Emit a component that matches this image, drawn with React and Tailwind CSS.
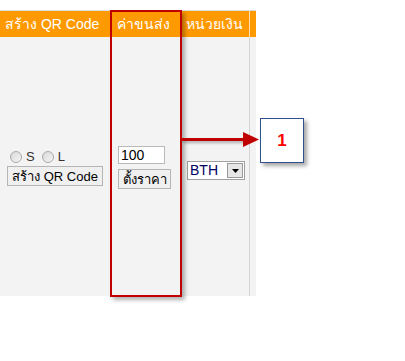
import React from "react";

const Radio = ({ label }) => (
  <label className="flex items-center gap-[4px]">
    <span className="w-[12px] h-[12px] rounded-full border border-[#a9a9a9] bg-gradient-to-br from-[#d8d8d8] to-[#f6f6f6]" />
    <span>{label}</span>
  </label>
);

const App = () => {
  return (
    <div
      className="relative w-[405px] h-[361px] bg-white text-[13px] text-black overflow-hidden"
      style={{ fontFamily: "Tahoma, 'Liberation Sans', 'Noto Sans', sans-serif" }}
    >
      {/* TABLE */}
      <div className="pt-[10px] w-[256px]">
        <div className="h-px bg-[#dcdcdc]" />
        <div className="flex h-[26px] bg-[#ff9900] text-white text-[14px] whitespace-nowrap">
          <div className="w-[111px] pl-[5px] flex items-center border-r border-[#ffc266]">สร้าง QR Code</div>
          <div className="w-[70px] pl-[6px] flex items-center border-r border-[#ffc266]">ค่าขนส่ง</div>
          <div className="w-[69px] pl-[5px] flex items-center border-r border-[#ffe0b3]">หน่วยเงิน</div>
          <div className="flex-1" />
        </div>
        <div className="flex h-[259px] bg-[#f3f3f3]">
          <div className="w-[111px] flex flex-col justify-center items-start pl-[7px] pt-[2px] border-r border-[#e2e2e2]">
            <div className="flex items-center gap-[7px] pl-[3px] text-[#333] h-[16px]">
              <Radio label="S" />
              <Radio label="L" />
            </div>
            <button className="mt-[1px] w-[96px] h-[20px] border border-[#b5b5b5] bg-[#f0f0f0] text-[13px] leading-none whitespace-nowrap text-center">
              สร้าง QR Code
            </button>
          </div>
          <div className="w-[70px] flex flex-col justify-center items-start pl-[7px] pt-[2px] border-r border-[#e2e2e2]">
            <div className="w-[47px] h-[18px] bg-white border border-[#b9b9b9] pl-[2px] text-[14px] leading-[16px]">100</div>
            <button className="mt-[5px] w-[53px] h-[20px] border border-[#b5b5b5] bg-[#f0f0f0] text-[13px] leading-none whitespace-nowrap text-center">
              ตั้งราคา
            </button>
          </div>
          <div className="w-[69px] flex items-center pl-[6px] pt-[8px] border-r border-[#d4d4d4]">
            <div className="flex items-center h-[19px] w-[58px] bg-white border border-[#a0a0a0] text-[14px]">
              <span className="flex-1 pl-[2px] text-[#000060]">BTH</span>
              <span className="w-[16px] h-[15px] mr-[1px] flex items-center justify-center bg-[#e6e6e6] border border-[#9a9a9a]">
                <svg width="7" height="4" viewBox="0 0 7 4"><path d="M0 0h7L3.5 4z" fill="#000" /></svg>
              </span>
            </div>
          </div>
          <div className="flex-1" />
        </div>
      </div>

      {/* highlight box */}
      <div className="absolute left-[110px] top-[10px] w-[72px] h-[287px] border-2 border-[#c00000] shadow-[3px_3px_4px_rgba(0,0,0,0.3)]" />

      {/* arrow */}
      <div className="absolute left-[181px] top-[138px] w-[64px] h-[3px] bg-[#c00000] shadow-[2px_2px_3px_rgba(0,0,0,0.3)]" />
      <svg className="absolute left-[243px] top-[132px]" width="16" height="15" viewBox="0 0 16 15">
        <path d="M0 0L16 7.5L0 15z" fill="#c00000" />
      </svg>

      {/* callout */}
      <div className="absolute left-[260px] top-[118px] w-[44px] h-[45px] bg-white border border-[#2f4f8f] shadow-[3px_3px_4px_rgba(0,0,0,0.35)] flex items-center justify-center text-[#ff0000] font-bold text-[17px]">
        1
      </div>
    </div>
  );
};

export default App;
